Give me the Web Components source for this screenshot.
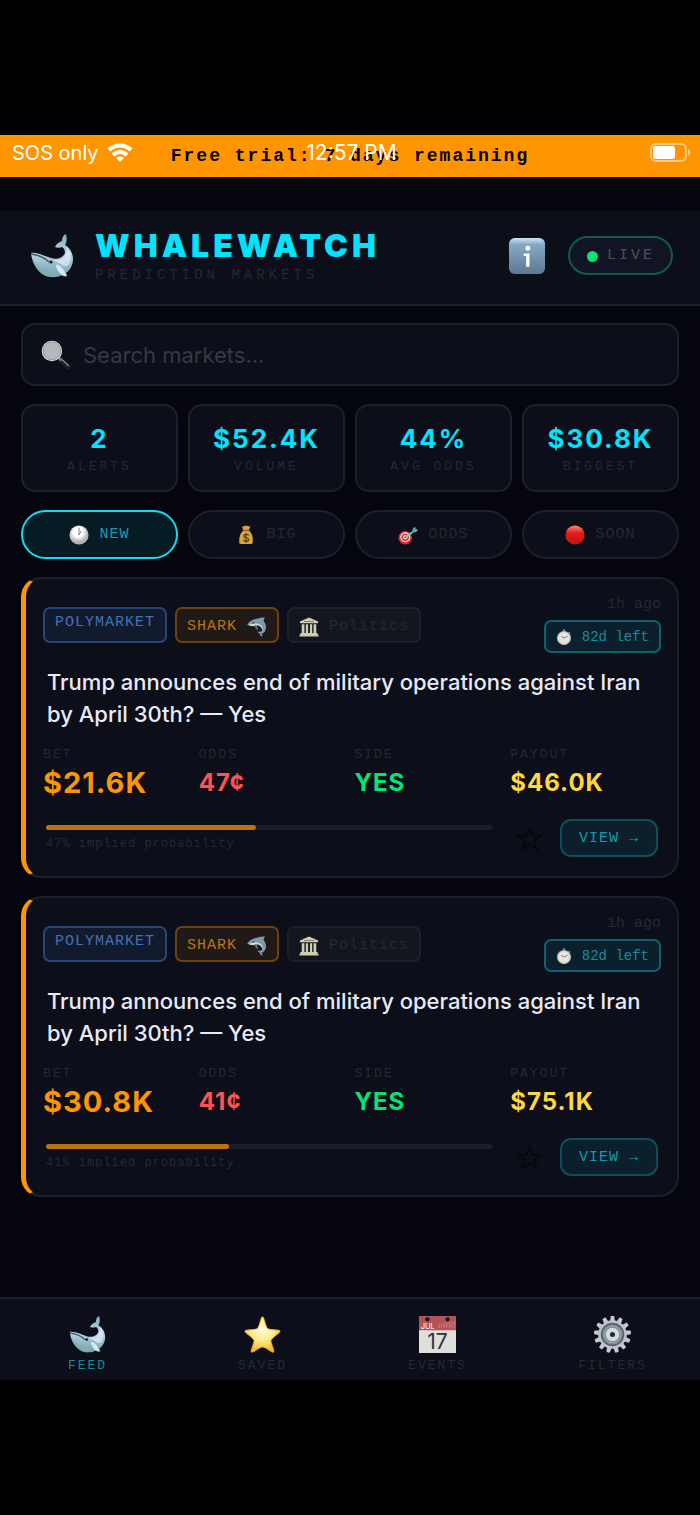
<!DOCTYPE html>
<html lang="en">
<head>
<meta charset="utf-8">
<meta name="viewport" content="width=device-width, initial-scale=1">
<title>WhaleWatch</title>
<style>
    :root {
        --sans: Inter, "Liberation Sans", sans-serif;
        --mono: "Liberation Mono", "Courier New", monospace;
        --page: #05060d;
        --panel: #0c0e19;
        --line: #1d1f29;
        --muted: #262832;
        --cyan: #00e5ff;
        --orange: #ff9500;
    }
    body {
        margin: 0;
        background: #000;
        color: #e8eaf6;
        font-family: var(--sans);
    }
</style>
</head>
<body>
<whale-app>
    <trial-banner slot="top">Free trial: 7 days remaining</trial-banner>
    <app-header slot="top">
        WHALEWATCH
        <span slot="sub">PREDICTION MARKETS</span>
    </app-header>

    <search-box placeholder="Search markets..."></search-box>
    <four-row>
        <stat-tile value="2">ALERTS</stat-tile>
        <stat-tile value="$52.4K">VOLUME</stat-tile>
        <stat-tile value="44%">AVG ODDS</stat-tile>
        <stat-tile value="$30.8K">BIGGEST</stat-tile>
    </four-row>
    <four-row>
        <filter-pill icon="clock" active>NEW</filter-pill>
        <filter-pill icon="bag">BIG</filter-pill>
        <filter-pill icon="target">ODDS</filter-pill>
        <filter-pill icon="red">SOON</filter-pill>
    </four-row>
    <market-card bet="$21.6K" odds="47" payout="$46.0K">Trump announces end of military operations against Iran by April 30th? — Yes</market-card>
    <market-card bet="$30.8K" odds="41" payout="$75.1K">Trump announces end of military operations against Iran by April 30th? — Yes</market-card>

    <tab-bar slot="bottom">
        <tab-item icon="whale" href="#feed" active>FEED</tab-item>
        <tab-item icon="star" href="#saved">SAVED</tab-item>
        <tab-item icon="calendar" href="#events">EVENTS</tab-item>
        <tab-item icon="gear" href="#filters">FILTERS</tab-item>
    </tab-bar>
</whale-app>

<script>
const teeth = Array.from({ length: 13 }, (_, i) =>
    `<path d="M19 7 20 0h4l1 7z" transform="rotate(${i * 360 / 13} 22 22)"/>`).join('')

const icons = {
    whale: `
        <defs>
            <linearGradient id="a" x1="0" y1="0" x2="0" y2="1"><stop offset="0" stop-color="#7fa9b8"/><stop offset=".45" stop-color="#b9d3e2"/><stop offset="1" stop-color="#6fa3b3"/></linearGradient>
        </defs>
        <path fill="url(#a)" d="M1 19C7 18 14 22 21 24c6 2 12 0 14-5 0-3-1-5-3-6-2 1-5 1-7 0 1-3 4-5 7-6 0-3 1-6 4-7 1 4 1 8-1 11 5 3 8 8 8 14 0 8-5 14-11 16-5 3-13 3-18 0C7 37 2 29 1 19z"/>
        <path fill="#8aa6b5" d="M3 25c4 7 9 10 15 11 4 1 7 3 9 6-5 2-11 1-15-2-5-4-8-9-9-15z" opacity=".6"/>
        <path fill="#dcebf5" d="M37 13c4 5 5 11 2 17-2 3-5 3-8 0-3-1-6-3-7-4 7 0 13-2 13-13z" opacity=".75"/>
        <path fill="none" stroke="#405865" d="M1 20c7 1 13 3 18 8" stroke-width="1.500"/>
        <path fill="#d7e8f5" stroke="#85a1b2" stroke-width=".6" d="M25 30c5 0 9 4 12 12-5 1-10-3-12-12z"/>
        <circle cx="21" cy="28" r="1.600" fill="#101820"/>`,
    info: `
        <defs><linearGradient id="a" x1="0" y1="0" x2="0" y2="1"><stop offset="0" stop-color="#d3e5f3"/><stop offset=".18" stop-color="#86a9c8"/><stop offset="1" stop-color="#5d7891"/></linearGradient></defs>
        <rect width="44" height="44" rx="7" fill="url(#a)"/>
        <circle cx="23" cy="12.500" r="3" fill="#fff"/>
        <path fill="#fff" d="M18 19h7v16h-4V22h-3z"/>`,
    search: `
        <path d="M28 28 40 40" stroke="#1d1e22" stroke-width="7" stroke-linecap="round"/>
        <path d="M29 27 41 38" stroke="#85888e" stroke-width="2"/>
        <path d="M25 25 30 30" stroke="#777" stroke-width="4"/>
        <circle cx="16" cy="16" r="14" fill="#b7b8bb" stroke="#dde1e6" stroke-width="2"/>
        <circle cx="16" cy="16" r="13" fill="none" stroke="#75808a"/>`,
    clock: `
        <defs><radialGradient id="a" cx=".45" cy=".35"><stop offset=".5" stop-color="#fff"/><stop offset="1" stop-color="#b5b5b5"/></radialGradient></defs>
        <circle cx="22" cy="22" r="21" fill="url(#a)"/>
        <path d="M22 6v16l5-9" fill="none" stroke="#777" stroke-width="2"/>`,
    bag: `
        <path fill="#d7a53e" d="M13 3c3 2 5-2 9-1 4-1 6 3 10 0l-4 10c8 6 9 14 9 25 0 3-1 5-4 5H11c-3 0-4-2-4-5 0-11 2-19 9-25z"/>
        <path d="M15 12h14" stroke="#a75a22" stroke-width="3"/>
        <path d="M28 23c-3-4-11-3-11 1 0 5 11 3 11 8 0 5-9 5-12 1M22 18v21" fill="none" stroke="#463511" stroke-width="2.500"/>`,
    target: `
        <circle cx="16" cy="28" r="15" fill="#d52d35"/>
        <circle cx="16" cy="27" r="11" fill="#f4ddd5"/>
        <circle cx="16" cy="27" r="8" fill="#ca2831"/>
        <circle cx="16" cy="27" r="5" fill="#f5d9d2"/>
        <circle cx="16" cy="27" r="2" fill="#c2222b"/>
        <path d="M17 27 34 14" stroke="#70cbd0" stroke-width="4"/>
        <path fill="#5ba8ad" d="m31 16 2-9 5-3 1 5 5 1-4 6z"/>`,
    red: `
        <defs><linearGradient id="a" x1="0" y1="0" x2="0" y2="1"><stop offset="0" stop-color="#ff8a7d"/><stop offset=".4" stop-color="#e11c18"/><stop offset="1" stop-color="#bd1512"/></linearGradient></defs>
        <circle cx="22" cy="22" r="21" fill="url(#a)"/>`,
    dolphin: `
        <path fill="#7d9ba8" d="M1 16C5 10 11 5 22 4c5-2 12-3 18-3-3 3-4 6-3 9 6 7 6 16 2 22-2 3-4 4-7 5l3 6c-4 0-7-2-7-6-2-1-4-3-5-5 4 1 7 1 10-1 2-7-2-12-9-13-6 3-13 3-20 0-2 0-3-1-3-2z"/>
        <path fill="#d2e2e6" d="M2 17c8 0 15-4 21-2 8 1 13 8 11 15-1-7-5-11-12-12-7 3-14 2-20-1z"/>
        <path fill="#5b7b88" d="M20 17c3 4 4 8 4 12-5-3-7-7-7-11z"/>
        <circle cx="14" cy="13" r="1.500" fill="#111"/>`,
    bank: `
        <g fill="#d0cdb0"><path d="M22 1 42 10v4H2v-4z"/><path d="M6 16h6v20H6zM15 16h5v20h-5zM24 16h5v20h-5zM32 16h6v20h-6z"/><path d="M3 35h38v4H3zM1 39h42v4H1z"/></g>
        <path d="M11 10h22" stroke="#817e69" stroke-width="2"/>`,
    timer: `
        <path fill="#7c8286" d="M19 1h6v7h-6zM36 7l4 4-4 4-3-4z"/>
        <circle cx="22" cy="25" r="18" fill="#e9e7e2" stroke="#a9adb0" stroke-width="3"/>
        <path d="m14 20 8 5 10-5" fill="none" stroke="#555" stroke-width="2"/>
        <circle cx="22" cy="25" r="13" fill="none" stroke="#aaa" stroke-dasharray="1 3"/>`,
    star: `
        <defs><radialGradient id="a" cx=".5" cy=".35" r=".65"><stop offset="0" stop-color="#fffde0"/><stop offset=".5" stop-color="#ffec8c"/><stop offset="1" stop-color="#f5b21d"/></radialGradient></defs>
        <path fill="url(#a)" stroke="#f0b42a" stroke-width="1" stroke-linejoin="round" d="M22 1c2 0 3 10 6 14 4 2 15 1 15 3s-9 7-11 11c0 4 5 13 3 14s-9-6-13-6-11 7-13 6 3-10 3-14C10 25 1 20 1 18s11-1 15-3c3-4 4-14 6-14z"/>`,
    calendar: `
        <path fill="#dededb" d="M0 0h44v44H0z"/>
        <path fill="#b65357" d="M0 0h44v17H0z"/>
        <circle cx="10" cy="4" r="2.500" fill="#140d17"/><circle cx="34" cy="4" r="2.500" fill="#140d17"/>
        <path d="M24 14v-4m3 4V9m3 5V8m3 6V8m3 6V7m3 7V7m3 7V6" stroke="#cf8587"/>
        <text x="2" y="15" font-size="9" fill="#fff">JUL</text>
        <text x="22" y="39" font-size="25" text-anchor="middle" fill="#333">17</text>`,
    gear: `
        <g fill="#c5cad2">${teeth}</g>
        <circle cx="22" cy="22" r="17" fill="#bcc2ca"/>
        <circle cx="22" cy="22" r="13" fill="#818b94" stroke="#59636c" stroke-width="2"/>
        <circle cx="22" cy="22" r="10" fill="none" stroke="#a4adb5"/>
        <circle cx="22" cy="22" r="5.500" fill="#252a32" stroke="#d5dae1" stroke-width="5"/>`,
    outline: `<path fill="none" stroke="#06070e" stroke-width="3" d="m22 3 5 14h15L30 26l5 15-13-9-13 9 5-15L2 17h15z"/>`
}

// every component renders its template once, when it is connected
class BaseElement extends HTMLElement {
    constructor(){
        super();
        this.attachShadow({mode: 'open'})
    }
    connectedCallback(){
        const template = document.createElement('template')
        template.innerHTML = `<style>* { box-sizing: border-box; } ${this.getStyles()}</style>${this.getTemplate()}`
        this.shadowRoot.appendChild( template.content.cloneNode(true) )
    }
    attr(name){
        return this.getAttribute(name) || ''
    }
}

class EmojiIcon extends BaseElement {
    getTemplate(){
        return `<svg viewBox="0 0 44 44" aria-hidden="true">${icons[this.attr('name')]}</svg>`
    }
    getStyles(){
        return `
            :host { display: block; flex: none; width: 20px; height: 20px; letter-spacing: 0; }
            svg { display: block; width: 100%; height: 100%; overflow: visible; font-family: var(--sans); }
        `
    }
}

class WhaleApp extends BaseElement {
    getTemplate(){
        return `
            <div class="screen">
                <slot name="top"></slot>
                <main><slot></slot></main>
                <slot name="bottom"></slot>
            </div>
        `
    }
    getStyles(){
        return `
            :host { display: flex; box-sizing: border-box; min-height: 100vh; padding: 135px 0; }
            .screen { flex: 1; min-width: 0; display: flex; flex-direction: column; background: var(--page); }
            main { flex: 1; display: flex; flex-direction: column; gap: 18px; padding: 17px 21px; }
        `
    }
}

class TrialBanner extends BaseElement {
    getTemplate(){
        return `
            <slot></slot>
            <div class="status">
                <span class="signal">SOS only
                    <svg width="26" height="20" viewBox="0 0 26 20" fill="none" stroke="#fff" stroke-width="4" aria-hidden="true">
                        <path d="M2 7c6-6 16-6 22 0M6 12c4-4 10-4 14 0"/>
                        <path fill="#fff" stroke="none" d="M13 19 9 15c2-2 6-2 8 0z"/>
                    </svg>
                </span>
                <span>12:57 PM</span>
                <svg class="battery" width="41" height="20" viewBox="0 0 41 20" aria-hidden="true">
                    <rect x="1" y="1" width="35" height="17" rx="5" fill="none" stroke="#ffc980" stroke-width="2"/>
                    <rect x="3" y="3" width="22" height="13" rx="3" fill="#fff"/>
                    <path fill="#ffc980" d="M38 6c3 1 3 6 0 7z"/>
                </svg>
            </div>
        `
    }
    getStyles(){
        return `
            :host {
                display: block;
                position: relative;
                padding: 11px 0;
                margin-bottom: 34px;
                background: var(--orange);
                color: #000;
                font: bold 18px/20px var(--mono);
                letter-spacing: 2px;
                text-align: center;
            }
            .status {
                position: absolute;
                inset: 0 9px 6px 12px;
                display: grid;
                grid-template-columns: 1fr auto 1fr;
                align-items: center;
                color: #fff;
                font: 21px/24px var(--sans);
                letter-spacing: 0;
            }
            .signal { display: flex; align-items: center; gap: 8px; font-size: 20px; }
            .battery { justify-self: end; }
        `
    }
}

class AppHeader extends BaseElement {
    getTemplate(){
        return `
            <emoji-icon name="whale"></emoji-icon>
            <div class="brand">
                <h1><slot></slot></h1>
                <p><slot name="sub"></slot></p>
            </div>
            <button class="info" aria-label="About"><emoji-icon name="info"></emoji-icon></button>
            <span class="live"><i></i>LIVE</span>
        `
    }
    getStyles(){
        return `
            :host {
                display: flex;
                align-items: center;
                padding: 17px 27px 21px 30px;
                background: var(--panel);
                border-bottom: 2px solid var(--line);
            }
            emoji-icon { width: 44px; height: 44px; }
            .brand { flex: 1; padding-left: 21px; }
            h1 { margin: 0; color: var(--cyan); font-size: 32px; line-height: 36px; font-weight: 900; letter-spacing: 4px; }
            p { margin: 3px 0 0; color: var(--muted); font: 14px/16px var(--mono); letter-spacing: 4px; }
            .info { padding: 0; border: 0; background: none; margin-right: 23px; }
            .info emoji-icon { width: 36px; height: 36px; }
            .live {
                display: flex;
                align-items: center;
                gap: 9px;
                padding: 9px 16px 8px 17px;
                border: 2px solid #125c46;
                border-radius: 20px;
                background: #111423;
                color: #4d4f5c;
                font: 15px/18px var(--mono);
                letter-spacing: 3px;
            }
            i { width: 11px; height: 11px; border-radius: 50%; background: #00e676; }
        `
    }
}

class SearchBox extends BaseElement {
    getTemplate(){
        return `
            <label>
                <emoji-icon name="search"></emoji-icon>
                <input type="search" aria-label="Search markets" placeholder="${this.attr('placeholder')}">
            </label>
        `
    }
    getStyles(){
        return `
            :host { display: block; }
            label {
                display: flex;
                align-items: center;
                gap: 12px;
                padding: 14px 18px 13px;
                border: 2px solid var(--line);
                border-radius: 14px;
                background: var(--panel);
            }
            emoji-icon { width: 30px; height: 30px; }
            input {
                flex: 1;
                min-width: 0;
                height: 32px;
                padding: 0;
                border: 0;
                outline: 0;
                background: none;
                color: inherit;
                font: 22px/32px var(--sans);
            }
            input::placeholder { color: #363842; }
        `
    }
}

class FourRow extends BaseElement {
    getTemplate(){
        return `<slot></slot>`
    }
    getStyles(){
        return `:host { display: grid; grid-template-columns: repeat(4, 1fr); gap: 10px; }`
    }
}

class StatTile extends BaseElement {
    getTemplate(){
        return `<strong>${this.attr('value')}</strong><span><slot></slot></span>`
    }
    getStyles(){
        return `
            :host {
                display: flex;
                flex-direction: column;
                align-items: center;
                gap: 3px;
                padding: 17px 0 14px;
                border: 2px solid var(--line);
                border-radius: 14px;
                background: var(--panel);
            }
            strong { color: var(--cyan); font-size: 26px; line-height: 32px; letter-spacing: 2px; }
            span { color: var(--muted); font: 13px/18px var(--mono); letter-spacing: 3px; }
        `
    }
}

class FilterPill extends BaseElement {
    getTemplate(){
        return `<button><emoji-icon name="${this.attr('icon')}"></emoji-icon><slot></slot></button>`
    }
    getStyles(){
        return `
            :host { display: block; }
            button {
                display: flex;
                align-items: center;
                justify-content: center;
                gap: 10px;
                width: 100%;
                padding: 12px 0 11px;
                border: 2px solid var(--line);
                border-radius: 25px;
                background: var(--panel);
                color: var(--muted);
                font: 15px/22px var(--mono);
                letter-spacing: 1px;
            }
            :host([active]) button { border-color: #12dcef; background: #061c25; color: #1b9eac; }
        `
    }
}

class MarketCard extends BaseElement {
    getTemplate(){
        const odds = this.attr('odds')
        return `
            <header>
                <div class="tags">
                    <span class="tag poly">POLYMARKET</span>
                    <span class="tag shark">SHARK <emoji-icon name="dolphin"></emoji-icon></span>
                    <span class="tag"><emoji-icon name="bank"></emoji-icon> Politics</span>
                </div>
                <div class="when">
                    <time>1h ago</time>
                    <span class="left"><emoji-icon name="timer"></emoji-icon>82d left</span>
                </div>
            </header>
            <h2><slot></slot></h2>
            <dl>
                <div><dt>BET</dt><dd class="bet">${this.attr('bet')}</dd></div>
                <div><dt>ODDS</dt><dd class="odds">${odds}¢</dd></div>
                <div><dt>SIDE</dt><dd class="side">YES</dd></div>
                <div><dt>PAYOUT</dt><dd class="payout">${this.attr('payout')}</dd></div>
            </dl>
            <footer>
                <div class="chance">
                    <div class="bar"><div style="width: ${odds}%"></div></div>
                    <small>${odds}% implied probability</small>
                </div>
                <button class="save" aria-label="Save market"><emoji-icon name="outline"></emoji-icon></button>
                <button class="view">VIEW →</button>
            </footer>
        `
    }
    getStyles(){
        return `
            :host {
                display: block;
                padding: 17px 16px 19px 17px;
                border: 2px solid var(--line);
                border-left: 5px solid var(--orange);
                border-radius: 20px;
                background: var(--panel);
            }
            header, .tags, .tag, .left, footer { display: flex; align-items: center; }
            header { justify-content: space-between; }
            .tags { gap: 8px; align-items: stretch; }
            .tag {
                gap: 10px;
                height: 36px;
                padding: 4px 10px 0;
                border: 2px solid var(--line);
                border-radius: 7px;
                background: #13151f;
                color: var(--muted);
                font: 15px/20px var(--mono);
                letter-spacing: 1px;
            }
            .poly { align-items: flex-start; border-color: #284673; background: #121b2d; color: #4272b3; }
            .shark { border-color: #6b430f; background: #211917; color: #bd7511; }
            .when { display: flex; flex-direction: column; align-items: flex-end; gap: 6px; }
            time { color: var(--muted); font: 15px/18px var(--mono); }
            .left {
                gap: 10px;
                padding: 5px 10px 4px;
                border: 2px solid #0d6270;
                border-radius: 7px;
                background: #0b202c;
                color: #178c9a;
                font: 14px/20px var(--mono);
            }
            .left emoji-icon { width: 16px; height: 16px; }
            h2 { margin: 13px 4px 0; font-size: 22px; line-height: 32px; font-weight: 500; }
            dl { display: grid; grid-template-columns: repeat(4, 1fr); gap: 5px; margin: 17px 0 0; }
            dt { color: var(--muted); font: 13px/16px var(--mono); letter-spacing: 2px; }
            dd { margin: 2px 0 0; font-size: 24px; line-height: 36px; font-weight: 700; letter-spacing: 1px; }
            .bet { color: var(--orange); font-size: 29px; }
            .odds { color: #ff5252; }
            .side { color: #00e676; }
            .payout { color: #ffd740; }
            footer { margin: 18px 3px 0; }
            .chance { flex: 1; }
            .bar { height: 5px; border-radius: 3px; background: #1a1c26; }
            .bar div { height: 100%; border-radius: 3px; background: #bd7110; }
            small { display: block; margin-top: 6px; color: var(--muted); font: 12px/16px var(--mono); letter-spacing: 1px; }
            .save { padding: 0; margin: 0 18px 0 24px; border: 0; background: none; }
            .save emoji-icon { width: 25px; height: 25px; }
            .view {
                padding: 6px 17px 4px;
                border: 2px solid #0c4f5c;
                border-radius: 11px;
                background: #0b202c;
                color: #179aa8;
                font: 15px/24px var(--mono);
                letter-spacing: 1px;
            }
        `
    }
}

class TabBar extends BaseElement {
    getTemplate(){
        return `<nav><slot></slot></nav>`
    }
    getStyles(){
        return `
            :host { display: block; background: var(--panel); border-top: 2px solid var(--line); }
            nav { display: grid; grid-template-columns: repeat(4, 1fr); padding: 17px 0 6px; }
        `
    }
}

class TabItem extends BaseElement {
    getTemplate(){
        return `<a href="${this.attr('href')}"><emoji-icon name="${this.attr('icon')}"></emoji-icon><slot></slot></a>`
    }
    getStyles(){
        return `
            :host { display: block; }
            a {
                display: flex;
                flex-direction: column;
                align-items: center;
                gap: 5px;
                color: var(--muted);
                font: 13px/16px var(--mono);
                letter-spacing: 2px;
                text-decoration: none;
            }
            emoji-icon { width: 37px; height: 37px; }
            :host([active]) a { color: #178997; }
        `
    }
}

customElements.define('emoji-icon', EmojiIcon)
customElements.define('whale-app', WhaleApp)
customElements.define('trial-banner', TrialBanner)
customElements.define('app-header', AppHeader)
customElements.define('search-box', SearchBox)
customElements.define('four-row', FourRow)
customElements.define('stat-tile', StatTile)
customElements.define('filter-pill', FilterPill)
customElements.define('market-card', MarketCard)
customElements.define('tab-bar', TabBar)
customElements.define('tab-item', TabItem)
</script>
</body>
</html>
